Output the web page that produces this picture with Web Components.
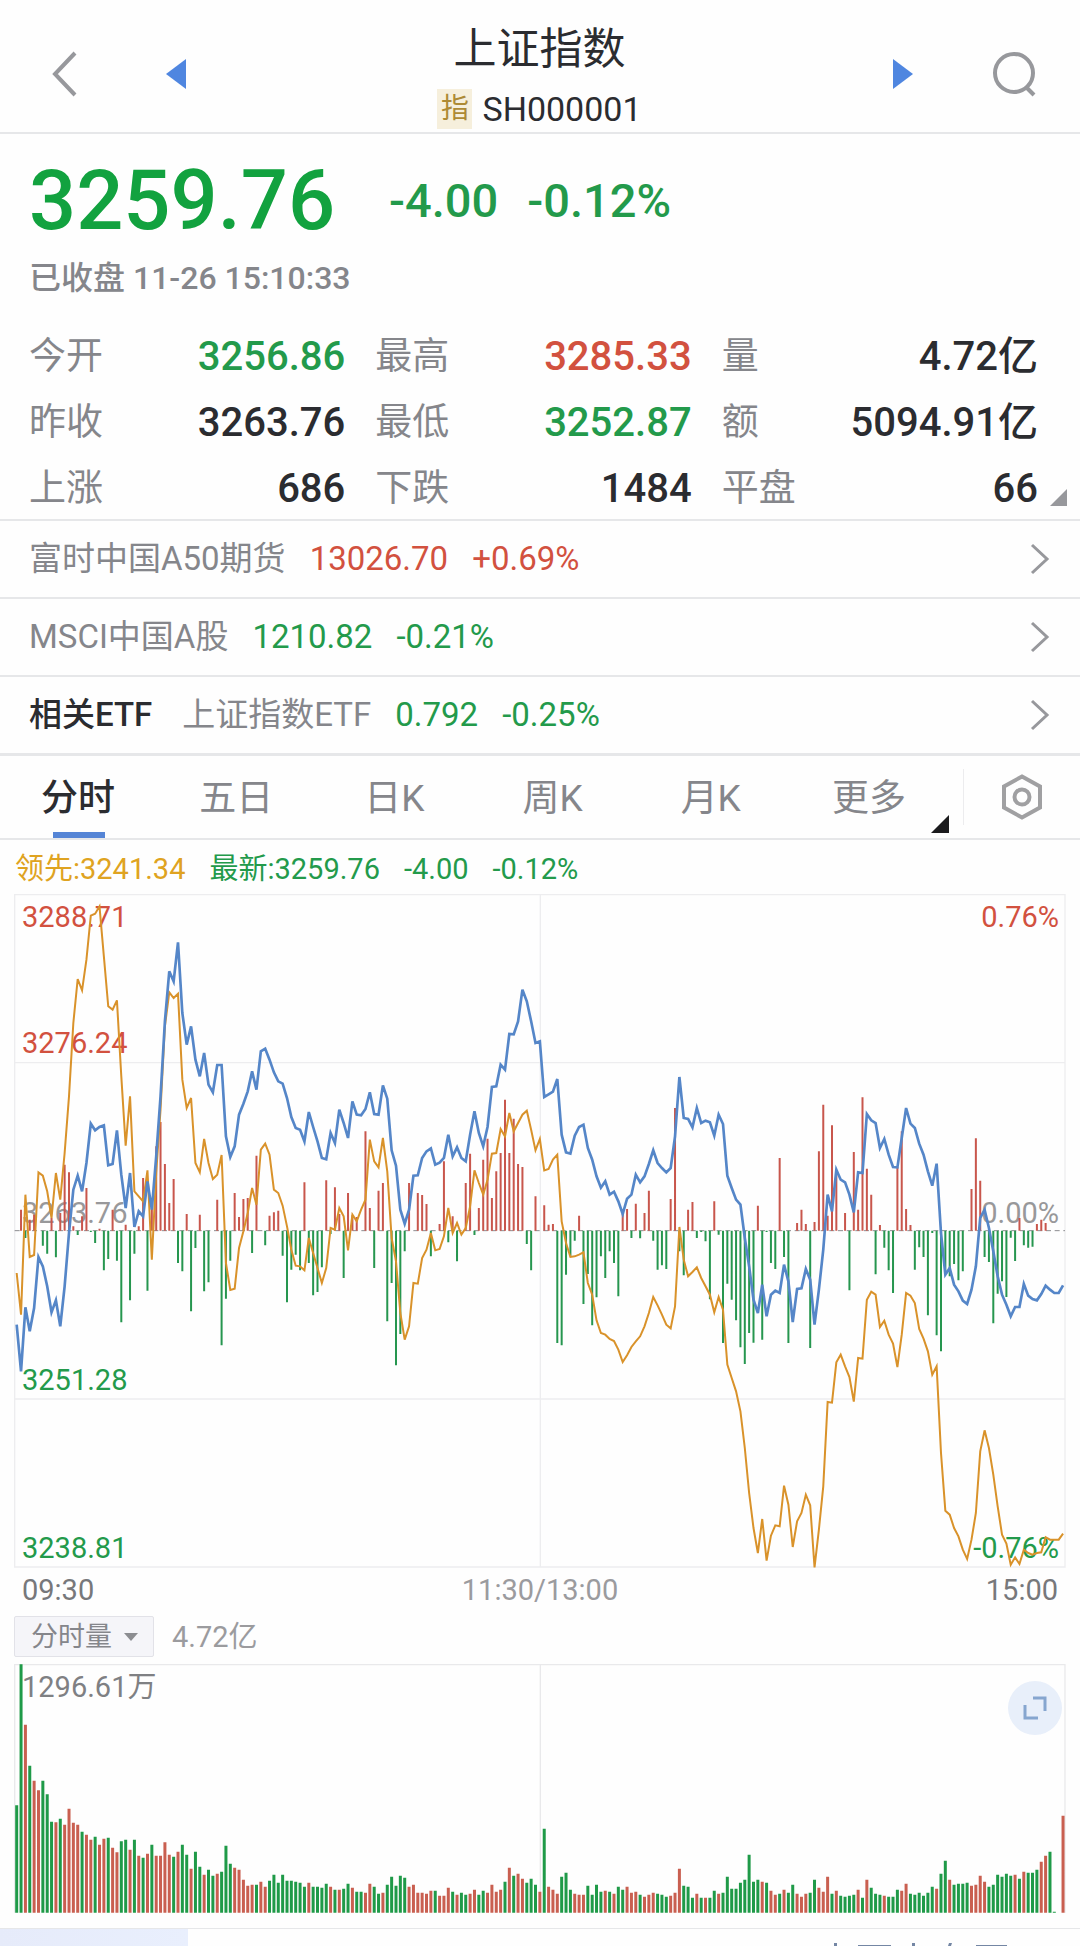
<!DOCTYPE html>
<html lang="zh-CN">
<head>
<meta charset="utf-8">
<meta name="viewport" content="width=device-width, initial-scale=1">
<title>上证指数 SH000001</title>
<style>
    :root {
        --up: #d2513f;
        --down: #12a23f;
        --down-soft: #239a4b;
        --text: #2b2c30;
        --muted: #85868b;
        --line: #e6e7e9;
        --blue: #4f86e0;
    }

    body {
        margin: 0;
        background: #fefefe;
        color: var(--text);
        font-family: Roboto, "Noto Sans CJK SC", sans-serif;
    }
</style>
</head>
<body>
<top-bar></top-bar>
<quote-panel></quote-panel>
<link-row tone="up"><span slot="name">富时中国A50期货</span><span slot="price">13026.70</span><span slot="change">+0.69%</span></link-row>
<link-row tone="down"><span slot="name">MSCI中国A股</span><span slot="price">1210.82</span><span slot="change">-0.21%</span></link-row>
<link-row tone="down"><span slot="lead">相关ETF</span><span slot="name">上证指数ETF</span><span slot="price">0.792</span><span slot="change">-0.25%</span></link-row>
<chart-tabs></chart-tabs>
<minute-chart></minute-chart>
<volume-chart></volume-chart>
<bottom-bar></bottom-bar>

<script>
// Chart space: three units per pixel at full width, one column per trading minute
const LEFT = 43;
const WIDTH = 3156;
const X0 = 51;
const STEP = 13.08;
const ZERO = 1053;
const xAt = (i) => (X0 + i * STEP).toFixed(1);

const PRICE = [
    1335, 1475, 1283, 1355, 1285, 1132, 1160, 1220, 1298, 1262, 1340, 1220, 1060, 930, 888, 935, 850, 732, 752, 742,
    737, 857, 853, 752, 885, 985, 880, 1042, 995, 1010, 905, 990, 830, 650, 425, 275, 305, 188, 400, 495,
    440, 540, 590, 520, 615, 638, 556, 556, 770, 832, 800, 705, 672, 635, 575, 630, 515, 507, 540, 578,
    605, 612, 655, 712, 745, 750, 785, 697, 742, 785, 835, 839, 760, 790, 690, 730, 775, 665, 705, 707,
    688, 638, 703, 705, 617, 657, 812, 858, 990, 1032, 990, 888, 887, 835, 815, 806, 855, 849, 835, 765,
    830, 803, 835, 845, 765, 695, 760, 800, 742, 622, 620, 555, 570, 463, 464, 425, 330, 365, 425, 490,
    485, 652, 644, 636, 598, 765, 818, 822, 768, 742, 735, 805, 840, 890, 924, 905, 945, 936, 965, 1003,
    957, 945, 885, 908, 890, 853, 812, 850, 865, 878, 865, 770, 592, 715, 718, 743, 685, 730, 723, 728,
    768, 705, 733, 888, 925, 960, 975, 1075, 1160, 1260, 1300, 1215, 1310, 1245, 1233, 1240, 1155, 1205, 1327, 1228,
    1226, 1168, 1200, 1335, 1230, 1110, 945, 995, 870, 900, 908, 945, 998, 878, 880, 703, 722, 730, 805, 778,
    825, 862, 863, 775, 685, 732, 745, 792, 825, 875, 918, 852, 1060, 1185, 1165, 1215, 1235, 1263, 1273, 1230,
    1160, 1015, 990, 1045, 1115, 1190, 1245, 1275, 1310, 1282, 1282, 1213, 1248, 1258, 1262, 1243, 1218, 1230, 1240, 1240,
    1217
];

const LEAD = [
    1180, 1305, 945, 1132, 1126, 878, 888, 935, 1015, 880, 960, 820, 650, 430, 298, 332, 240, 108, 102, 80,
    230, 380, 390, 362, 590, 798, 650, 935, 950, 965, 872, 1140, 880, 690, 440, 338, 355, 342, 600, 685,
    655, 850, 878, 778, 850, 898, 885, 826, 1150, 1231, 1227, 1105, 1055, 1000, 925, 975, 810, 792, 825, 930,
    940, 978, 1040, 1110, 1158, 1160, 1172, 1075, 1120, 1165, 1210, 1165, 1045, 1050, 985, 1010, 1112, 1005, 1025, 990,
    960, 780, 845, 863, 775, 875, 1075, 1145, 1300, 1380, 1340, 1210, 1212, 1135, 1110, 1060, 1112, 1108, 1070, 985,
    1060, 1030, 1065, 1045, 980, 872, 910, 945, 900, 822, 820, 748, 770, 700, 755, 730, 705, 693, 750, 812,
    778, 872, 868, 840, 825, 1025, 1090, 1132, 1130, 1125, 1118, 1210, 1245, 1322, 1360, 1365, 1378, 1384, 1410, 1447,
    1427, 1402, 1385, 1370, 1340, 1300, 1252, 1277, 1305, 1335, 1346, 1280, 1042, 1140, 1190, 1177, 1163, 1195, 1220, 1245,
    1298, 1252, 1290, 1455, 1495, 1535, 1595, 1705, 1840, 1945, 2020, 1918, 2043, 1968, 1937, 1940, 1818, 1875, 2002, 1925,
    1900, 1845, 1877, 2063, 1950, 1820, 1567, 1569, 1448, 1425, 1460, 1492, 1566, 1435, 1437, 1260, 1236, 1245, 1342, 1323,
    1365, 1392, 1462, 1365, 1240, 1248, 1270, 1348, 1377, 1415, 1485, 1460, 1720, 1893, 1905, 1945, 1970, 2010, 2038, 1980,
    1900, 1715, 1652, 1705, 1785, 1880, 1965, 1992, 2055, 2033, 2053, 2010, 2020, 2025, 2020, 2018, 1973, 1980, 1980, 1980,
    1962
];

// End of each bar that grows from the zero line, 0 for a flat minute
const FLOW = [
    0, 990, 1075, 1020, 1005, 0, 1098, 1122, 1015, 1133, 1000, 855, 878, 1040, 1066, 1010, 925, 1057, 1090, 1047,
    1172, 1138, 990, 1143, 1328, 1035, 1262, 1122, 1040, 895, 1233, 985, 800, 727, 853, 970, 898, 1150, 1175, 1003,
    1295, 1105, 1005, 1235, 1208, 0, 960, 1397, 1257, 1143, 940, 1012, 958, 955, 1120, 828, 0, 1097, 1008, 998,
    993, 1128, 1268, 1170, 1125, 1172, 908, 1150, 1247, 1237, 1163, 902, 1063, 923, 1003, 1195, 940, 1007, 1012, 0,
    755, 985, 1165, 933, 910, 1325, 1210, 1457, 1363, 1115, 910, 0, 940, 946, 973, 1130, 0, 1033, 845, 1088,
    1010, 1145, 0, 910, 822, 1066, 985, 840, 777, 955, 875, 820, 660, 820, 717, 853, 862, 1093, 1172, 950,
    0, 977, 1035, 1033, 1390, 1397, 1185, 1130, 1083, 1008, 1273, 1183, 1337, 1253, 1130, 1195, 1115, 1150, 1250, 1003,
    988, 1075, 972, 1076, 1000, 933, 1083, 1170, 1157, 1168, 958, 685, 1115, 1187, 990, 967, 1075, 1057, 1085, 1259,
    965, 1065, 1390, 1212, 1260, 1322, 1403, 1453, 1360, 1389, 978, 1380, 1057, 1150, 1168, 835, 1132, 1390, 0, 1030,
    990, 1033, 1405, 1027, 815, 675, 1008, 737, 880, 0, 1000, 1232, 817, 990, 653, 867, 945, 1184, 1036, 1104,
    1172, 1240, 862, 755, 988, 1036, 1170, 1103, 1132, 1307, 1060, 1367, 1415, 1180, 1190, 1153, 1202, 1175, 0, 928,
    776, 903, 1132, 1147, 1331, 1242, 1205, 1252, 1074, 1144, 1015, 1097, 1104, 1101, 1033, 1020, 1030, 0, 0, 0,
    0
];

// Top of each volume bar, g = falling minute, r = rising minute
const VOLUME = `
467g 44g 225r 348g 393r 422r 393g 434g 516g 518r 507g 525r 477r 519r 525r 546g 555r 570r 561g 585r
567r 564g 594r 608r 575g 570g 600r 570g 618r 624g 612r 585g 618r 618r 578r 615r 621g 606r 585g 615g
657r 606g 651g 675r 660g 678g 672r 666g 588g 642g 654r 660r 690r 708r 705r 705g 696r 711r 693g 675g
699g 675g 693g 693g 696g 699g 711g 699r 711g 711g 714g 702g 711r 720g 720r 717g 702g 714r 726g 726g
729r 702r 711g 732g 729r 705g 681g 708g 678g 684g 711r 705r 729r 729r 732r 723r 723g 738r 738r 714r
726g 735r 729g 735g 732r 720r 735g 723g 729r 705r 726r 720r 696g 654r 678g 672r 687r 699g 687g 705g
726r 537g 711r 720r 732r 681g 669g 720g 732r 735r 735r 708g 735g 705g 726g 723r 726g 732r 711g 720g
711r 729r 726r 735g 741r 735r 729r 732g 735g 741g 738r 729r 657r 708g 711g 744g 732r 744g 744r 744g
723g 732r 729g 681g 717g 717g 699g 690g 615g 696g 690g 696r 699g 723r 735r 732g 720r 729g 705g 732r
741r 732r 729g 690g 714r 726r 681r 732g 723r 738g 741g 738g 735g 720r 744g 690r 714g 732g 735g 738r
741g 741g 720g 723r 702r 732g 735g 729g 738g 729g 711g 717r 672g 633g 690r 705g 702g 702g 699g 708r
705r 678r 696r 711g 705g 675g 681g 672g 678g 675r 687g 666r 669g 669g 660g 636r 618r 606g 786g 789g
498r`.trim().split(/\s+/);

class TopBar extends HTMLElement {
    constructor() {
        super();
        this.attachShadow({ mode: 'open' });
    }

    connectedCallback() {
        this.shadowRoot.innerHTML = `
        <style>
            :host { display: block; border-bottom: 2px solid var(--line); }
            header {
                display: grid;
                grid-template-columns: 48px 24px 1fr 24px 48px;
                column-gap: 76px;
                align-items: center;
                height: 132px;
                padding: 0 41px 0 40px;
                box-sizing: border-box;
            }
            button { display: flex; justify-content: center; padding: 16px 0 0; border: 0; background: none; }
            .title { text-align: center; padding-top: 14px; }
            h1 { margin: 0; font-size: 43px; line-height: 64px; font-weight: 400; }
            .code { display: flex; justify-content: center; align-items: center; gap: 10px; font-size: 34px; line-height: 40px; margin-top: 8px; }
            .badge { background: #f6efdc; color: #ad8a35; font-size: 28px; width: 35px; }
        </style>
        <header>
            <button aria-label="返回"><svg width="28" height="46" viewBox="0 0 28 46" fill="none" stroke="#97989c" stroke-width="4"><path d="M25 2 5 23l20 21"/></svg></button>
            <button aria-label="上一个"><svg width="22" height="30" viewBox="0 0 22 30"><path d="M21 0v30L1 15z" fill="#4f86e0"/></svg></button>
            <div class="title">
                <h1>上证指数</h1>
                <div class="code"><span class="badge">指</span><span>SH000001</span></div>
            </div>
            <button aria-label="下一个"><svg width="22" height="30" viewBox="0 0 22 30"><path d="M1 0v30l20-15z" fill="#4f86e0"/></svg></button>
            <button aria-label="搜索"><svg width="46" height="46" viewBox="0 0 46 46" fill="none" stroke="#97989c" stroke-width="4"><circle cx="22" cy="22" r="19"/><path d="m34 36 8 8"/></svg></button>
        </header>`;
    }
}

class QuotePanel extends HTMLElement {
    constructor() {
        super();
        this.attachShadow({ mode: 'open' });
    }

    connectedCallback() {
        const stats = [
            ['今开', '3256.86', 'down'], ['最高', '3285.33', 'up'], ['量', '4.72亿', ''],
            ['昨收', '3263.76', ''], ['最低', '3252.87', 'down'], ['额', '5094.91亿', ''],
            ['上涨', '686', ''], ['下跌', '1484', ''], ['平盘', '66', '']
        ];
        this.shadowRoot.innerHTML = `
        <style>
            :host { display: block; position: relative; padding: 14px 42px 0 29px; border-bottom: 2px solid var(--line); }
            .price { display: flex; align-items: center; height: 104px; color: var(--down); font-weight: 500; }
            .last { font-size: 83px; margin-right: 54px; }
            .delta { font-size: 47px; margin-right: 29px; color: var(--down-soft); }
            .time { font-size: 32px; line-height: 48px; font-weight: 500; color: var(--muted); margin-top: 2px; }
            dl {
                display: grid;
                grid-template-columns: repeat(3, 1fr);
                gap: 6px 30px;
                margin: 25px 0 0;
                font-size: 40px;
                line-height: 60px;
            }
            dl div { display: flex; justify-content: space-between; }
            dt { color: var(--muted); font-size: 37px; }
            dd { margin: 0; font-weight: 500; }
            .up { color: var(--up); }
            .down { color: var(--down-soft); }
            .corner { position: absolute; right: 13px; bottom: 13px; }
        </style>
        <div class="price"><span class="last">3259.76</span><span class="delta">-4.00</span><span class="delta">-0.12%</span></div>
        <div class="time">已收盘 11-26 15:10:33</div>
        <dl>${stats.map(([k, v, c]) => `<div><dt>${k}</dt><dd class="${c}">${v}</dd></div>`).join('')}</dl>
        <svg class="corner" width="17" height="17" viewBox="0 0 17 17"><path d="M17 0v17H0z" fill="#97989c"/></svg>`;
    }
}

class LinkRow extends HTMLElement {
    constructor() {
        super();
        this.attachShadow({ mode: 'open' });
    }

    connectedCallback() {
        this.shadowRoot.innerHTML = `
        <style>
            :host { display: block; border-bottom: 2px solid var(--line); font-size: 33px; }
            a { display: flex; align-items: center; gap: 24px; height: 76px; line-height: 76px; padding: 0 30px 0 29px; color: var(--muted); text-decoration: none; }
            :host([tone="up"]) .value { color: var(--up); }
            :host([tone="down"]) .value { color: var(--down-soft); }
            .value { display: flex; gap: 24px; }
            slot[name="lead"]::slotted(span) { color: var(--text); font-weight: 500; margin-right: 6px; }
            svg { margin-left: auto; }
        </style>
        <a href="#">
            <slot name="lead"></slot>
            <slot name="name"></slot>
            <span class="value"><slot name="price"></slot><slot name="change"></slot></span>
            <svg width="20" height="32" viewBox="0 0 20 32" fill="none" stroke="#97989c" stroke-width="3"><path d="m2 2 15 14L2 30"/></svg>
        </a>`;
    }
}

class ChartTabs extends HTMLElement {
    constructor() {
        super();
        this.attachShadow({ mode: 'open' });
    }

    connectedCallback() {
        const tabs = ['分时', '五日', '日K', '周K', '月K', '更多'];
        this.shadowRoot.innerHTML = `
        <style>
            :host { display: flex; height: 82px; border-top: 1px solid var(--line); border-bottom: 2px solid var(--line); }
            nav { flex: 1; display: grid; grid-template-columns: repeat(6, 1fr); }
            button { position: relative; border: 0; padding: 0; background: none; color: var(--muted); font: inherit; font-size: 37px; line-height: 48px; }
            nav button { padding: 4px 2px 0 0; }
            .on { color: var(--text); font-weight: 500; }
            .on::after { content: ''; position: absolute; left: 50%; bottom: 0; width: 52px; height: 6px; margin-left: -26px; background: #5585d6; }
            .more svg { position: absolute; right: 0; bottom: 5px; }
            .gear { display: flex; align-items: center; justify-content: center; width: 117px; margin: 13px 0 13px 14px; border-left: 1px solid #ececee; }
        </style>
        <nav>${tabs.map((t, i) => `<button class="${i === 0 ? 'on' : ''}${i === 5 ? 'more' : ''}">${t}${i === 5 ? '<svg width="18" height="18" viewBox="0 0 18 18"><path d="M18 0v18H0z" fill="#1b1b1d"/></svg>' : ''}</button>`).join('')}</nav>
        <button class="gear" aria-label="设置"><svg width="42" height="48" viewBox="0 0 42 48" fill="none" stroke="#a0a0a2" stroke-width="4"><path d="M21 3.500 39 13.500v21L21 44.500 3 34.500v-21z"/><circle cx="21" cy="24" r="7.500"/></svg></button>`;
    }
}

class MinuteChart extends HTMLElement {
    constructor() {
        super();
        this.attachShadow({ mode: 'open' });
    }

    line(values) {
        return values.map((y, i) => `${xAt(i)},${y}`).join(' ');
    }

    bars(up) {
        return FLOW.map((y, i) => (y && (y < ZERO) === up ? `M${xAt(i)} ${ZERO}V${y}` : '')).join('');
    }

    connectedCallback() {
        this.shadowRoot.innerHTML = `
        <style>
            :host { display: block; padding: 0 14px; font-size: 29px; line-height: 36px; }
            .legend { display: flex; gap: 24px; padding: 11px 0 7px 1px; color: var(--down-soft); }
            .legend .lead { color: #dfa321; }
            .plot { position: relative; }
            .plot > svg { position: relative; display: block; width: 100%; height: auto; }
            .label { position: absolute; left: 8px; }
            .label.right { left: auto; right: 7px; }
            .up { color: var(--up); }
            .down { color: var(--down-soft); }
            .flat { color: #98989a; }
            .axis { display: grid; grid-template-columns: 1fr auto 1fr; padding: 4px 8px 7px; color: #77787b; }
            .axis .mid { color: #9b9b9e; }
            .axis span:last-child { text-align: right; }
        </style>
        <div class="legend"><span class="lead">领先:3241.34</span><span>最新:3259.76</span><span>-4.00</span><span>-0.12%</span></div>
        <div class="plot">
            <span class="label up" style="top: 0.8%">3288.71</span>
            <span class="label up" style="top: 19.5%">3276.24</span>
            <span class="label flat" style="top: 44.6%">3263.76</span>
            <span class="label down" style="top: 69.5%">3251.28</span>
            <span class="label down" style="top: 94.3%">3238.81</span>
            <span class="label right up" style="top: 0.8%">0.76%</span>
            <span class="label right flat" style="top: 44.6%">0.00%</span>
            <span class="label right down" style="top: 94.3%">-0.76%</span>
            <svg viewBox="${LEFT} 43 ${WIDTH} 2022" fill="none">
                <path d="M45 45H3196V2062H45zM45 549H3196M45 1558H3196M1622 45V2062" stroke="#ededef" stroke-width="4"/>
                <path d="M45 ${ZERO}H3196" stroke="#8d8d90" stroke-width="3" stroke-dasharray="15 11"/>
                <path d="${this.bars(true)}" stroke="#c8564c" stroke-width="6"/>
                <path d="${this.bars(false)}" stroke="#26964f" stroke-width="6"/>
                <polyline points="${this.line(LEAD)}" stroke="#d9922a" stroke-width="6"/>
                <polyline points="${this.line(PRICE)}" stroke="#5586c8" stroke-width="8"/>
            </svg>
        </div>
        <div class="axis"><span>09:30</span><span class="mid">11:30/13:00</span><span>15:00</span></div>`;
    }
}

class VolumeChart extends HTMLElement {
    constructor() {
        super();
        this.attachShadow({ mode: 'open' });
    }

    bars(tone) {
        return VOLUME.map((v, i) => (v.endsWith(tone) ? `M${xAt(i)} 789V${parseInt(v, 10)}` : '')).join('');
    }

    connectedCallback() {
        this.shadowRoot.innerHTML = `
        <style>
            :host { display: block; padding: 1px 14px 15px; font-size: 29px; line-height: 36px; }
            .head { display: flex; align-items: center; gap: 18px; height: 41px; margin-bottom: 7px; color: #9b9b9e; }
            label { position: relative; display: flex; align-items: center; }
            select {
                appearance: none;
                width: 140px;
                height: 41px;
                padding: 0 0 0 16px;
                border: 1px solid #e2e2e8;
                border-radius: 2px;
                background: #f5f5f9;
                color: var(--muted);
                font: inherit;
                font-size: 27px;
                line-height: 38px;
            }
            label svg { position: absolute; right: 16px; pointer-events: none; }
            .plot { position: relative; }
            .plot > svg { position: relative; display: block; width: 100%; height: auto; }
            .max { position: absolute; left: 8px; top: 5px; color: #7f8083; }
            button {
                position: absolute;
                top: 17px;
                right: 4px;
                display: flex;
                align-items: center;
                justify-content: center;
                width: 54px;
                height: 54px;
                padding: 0;
                border: 0;
                border-radius: 50%;
                background: #e8effa;
            }
        </style>
        <div class="head">
            <label><select aria-label="指标"><option>分时量</option></select><svg width="14" height="8" viewBox="0 0 14 8"><path d="M0 0h14L7 8z" fill="#8c8d91"/></svg></label>
            <span>4.72亿</span>
        </div>
        <div class="plot">
            <span class="max">1296.61万</span>
            <svg viewBox="${LEFT} 43 ${WIDTH} 746" fill="none">
                <path d="M45 789V45H3196V789M1622 45V789" stroke="#e9e9eb" stroke-width="4"/>
                <path d="${this.bars('r')}" stroke="#c95f50" stroke-width="9"/>
                <path d="${this.bars('g')}" stroke="#1f9a48" stroke-width="9"/>
            </svg>
            <button aria-label="全屏"><svg width="24" height="24" viewBox="0 0 24 24" fill="none" stroke="#86a6cf" stroke-width="3"><path d="M10 2h12v13M2 9v13h13"/></svg></button>
        </div>`;
    }
}

class BottomBar extends HTMLElement {
    constructor() {
        super();
        this.attachShadow({ mode: 'open' });
    }

    connectedCallback() {
        this.shadowRoot.innerHTML = `
        <style>
            :host { display: flex; justify-content: space-between; height: 17px; border-top: 1px solid var(--line); overflow: hidden; }
            .active { width: 188px; background: linear-gradient(90deg, #e6ebfa, #e9effd); }
            svg { align-self: flex-end; margin-right: 72px; }
        </style>
        <div class="active"></div>
        <svg width="174" height="3" viewBox="0 0 174 3"><path d="M0 0h3v3H0zM78 0h3v3h-3zM115 0h3l-1 3h-3zM24 2h33v1H24zM142 2h31v1h-31z" fill="#7486a4"/></svg>`;
    }
}

customElements.define('top-bar', TopBar);
customElements.define('quote-panel', QuotePanel);
customElements.define('link-row', LinkRow);
customElements.define('chart-tabs', ChartTabs);
customElements.define('minute-chart', MinuteChart);
customElements.define('volume-chart', VolumeChart);
customElements.define('bottom-bar', BottomBar);
</script>
</body>
</html>
